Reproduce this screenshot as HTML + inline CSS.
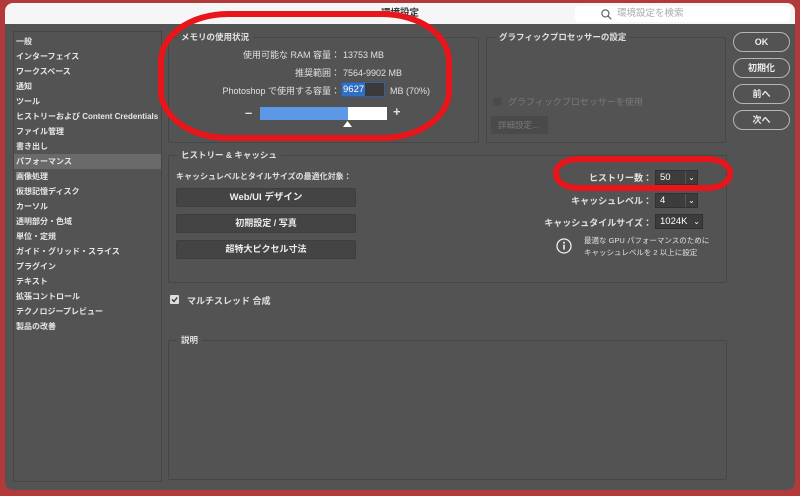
<!DOCTYPE html>
<html><head><meta charset="utf-8"><style>
*{margin:0;padding:0;box-sizing:border-box}
body{width:800px;height:496px;background:#b23a3a;position:relative;overflow:hidden;font-family:"Liberation Sans","Noto Sans CJK JP",sans-serif;font-size:9px;color:#e0e0e0}
.win{position:absolute;left:5px;top:3px;width:790px;height:487px;background:#535353;border-radius:8px;overflow:hidden}
.title{position:absolute;left:0;top:0;width:790px;height:21px;background:#f6f6f6;color:#333;text-align:center;font-size:9.5px;line-height:21px;font-weight:bold}
.search{position:absolute;left:570px;top:3px;width:215px;height:16px;background:#fff;border-radius:4px;color:#aaa;font-weight:normal;font-size:9.5px;line-height:16px;text-align:left;padding-left:42px}
.side{position:absolute;left:13px;top:31px;width:149px;height:451px;border:1px solid #454545;background:#535353}
.side div{height:15px;line-height:15px;padding-left:2px;white-space:nowrap;overflow:hidden;font-weight:bold;font-size:8px;color:#e6e6e6}
.side .sel{background:#6a6a6a}
.box{position:absolute;border:1px solid #464646;border-radius:2px}
.lbl{position:absolute;top:-7px;left:8px;background:#535353;padding:0 4px;font-weight:bold;font-size:8.5px}
.t,.r{position:absolute;white-space:nowrap;line-height:12px}
.r{text-align:right}
.btn{position:absolute;background:#444;border:1px solid #3e3e3e;border-radius:2px;text-align:center;font-weight:bold;color:#eee}
.rb{position:absolute;left:733px;width:57px;height:20px;border:1px solid #b5b5b5;border-radius:10px;text-align:center;line-height:18px;font-weight:bold;color:#eee;font-size:9px}
.sel2{position:absolute;background:#3c3c3c;border:1px solid #303030;height:15px;line-height:13px;padding-left:4px;color:#fff;font-size:9.5px}
.ell{position:absolute;border:6px solid #e8151a}
</style></head><body>
<div class="win">
<div class="title">環境設定<div class="search"><svg style="position:absolute;left:26px;top:3px" width="11" height="11" viewBox="0 0 10 10"><circle cx="4" cy="4" r="3.2" fill="none" stroke="#666" stroke-width="1.1"/><path d="M6.4 6.4L9.3 9.3" stroke="#666" stroke-width="1.2"/></svg>環境設定を検索</div></div>
</div>
<div class="side">
<div style="margin-top:2px">一般</div><div>インターフェイス</div><div>ワークスペース</div><div>通知</div><div>ツール</div><div>ヒストリーおよび Content Credentials</div><div>ファイル管理</div><div>書き出し</div><div class="sel">パフォーマンス</div><div>画像処理</div><div>仮想記憶ディスク</div><div>カーソル</div><div>透明部分・色域</div><div>単位・定規</div><div>ガイド・グリッド・スライス</div><div>プラグイン</div><div>テキスト</div><div>拡張コントロール</div><div>テクノロジープレビュー</div><div>製品の改善</div>
</div>
<div class="box" style="left:168px;top:37px;width:311px;height:106px"><div class="lbl">メモリの使用状況</div></div>
<div class="r" style="right:460px;top:49px">使用可能な RAM 容量：</div>
<div class="t" style="left:343px;top:49px">13753 MB</div>
<div class="r" style="right:460px;top:67px">推奨範囲：</div>
<div class="t" style="left:343px;top:67px">7564-9902 MB</div>
<div class="r" style="right:460px;top:85px">Photoshop で使用する容量：</div>
<div style="position:absolute;left:341px;top:82px;width:44px;height:15px;background:#3a3a3a;border:1px solid #2f5f9f"><span style="background:#2f6fc4;color:#fff;font-size:9.5px;padding:0 1px;line-height:13px;display:inline-block">9627</span></div>
<div class="t" style="left:390px;top:85px">MB (70%)</div>
<div class="t" style="left:245px;top:107px;font-size:13px;font-weight:bold">–</div>
<div style="position:absolute;left:260px;top:107px;width:127px;height:13px;background:#fff"><div style="width:88px;height:13px;background:#5b98e6"></div></div>
<div class="t" style="left:393px;top:106px;font-size:13px;font-weight:bold">+</div>
<svg style="position:absolute;left:343px;top:121px" width="9" height="7"><path d="M4.5 0L9 6H0Z" fill="#fff"/></svg>
<div class="box" style="left:486px;top:37px;width:240px;height:106px"><div class="lbl">グラフィックプロセッサーの設定</div></div>
<div style="position:absolute;left:493px;top:97px;width:9px;height:9px;background:#4a4a4a;border:1px solid #4f4f4f"></div>
<div class="t" style="left:508px;top:96px;color:#7a7a7a">グラフィックプロセッサーを使用</div>
<div style="position:absolute;left:491px;top:116px;width:57px;height:18px;background:#4a4a4a;color:#7a7a7a;line-height:18px;padding-left:7px;font-size:8.5px">詳細設定...</div>
<div class="rb" style="top:32px">OK</div><div class="rb" style="top:58px">初期化</div><div class="rb" style="top:84px">前へ</div><div class="rb" style="top:110px">次へ</div>
<div class="box" style="left:168px;top:155px;width:559px;height:128px"><div class="lbl">ヒストリー &amp; キャッシュ</div></div>
<div class="t" style="left:176px;top:171px;font-size:8px;font-weight:bold">キャッシュレベルとタイルサイズの最適化対象：</div>
<div class="btn" style="left:176px;top:188px;width:180px;height:19px;line-height:17px;font-size:9.5px">Web/UI デザイン</div>
<div class="btn" style="left:176px;top:214px;width:180px;height:19px;line-height:17px;font-size:9px">初期設定 / 写真</div>
<div class="btn" style="left:176px;top:240px;width:180px;height:19px;line-height:17px;font-size:9px">超特大ピクセル寸法</div>
<div class="r" style="right:148px;top:172px;font-weight:bold">ヒストリー数：</div>
<div class="sel2" style="left:655px;top:170px;width:43px">50<span style="position:absolute;right:0;top:0;width:12px;border-left:1px solid #555;text-align:center;font-size:8px">⌄</span></div>
<div class="r" style="right:148px;top:195px;font-weight:bold">キャッシュレベル：</div>
<div class="sel2" style="left:655px;top:193px;width:43px">4<span style="position:absolute;right:0;top:0;width:12px;border-left:1px solid #555;text-align:center;font-size:8px">⌄</span></div>
<div class="r" style="right:148px;top:217px;font-weight:bold">キャッシュタイルサイズ：</div>
<div class="sel2" style="left:655px;top:214px;width:48px">1024K<span style="position:absolute;right:2px;top:0;font-size:8px">⌄</span></div>
<svg style="position:absolute;left:556px;top:238px" width="16" height="16"><circle cx="8" cy="8" r="7" fill="none" stroke="#eee" stroke-width="1.3"/><circle cx="8" cy="4.6" r="1" fill="#eee"/><rect x="7.2" y="6.6" width="1.6" height="5" fill="#eee"/></svg>
<div class="t" style="left:584px;top:235px;font-size:7.5px;line-height:12px">最適な GPU パフォーマンスのために<br>キャッシュレベルを 2 以上に設定</div>
<div style="position:absolute;left:170px;top:295px;width:9px;height:9px;background:#ddd;border-radius:1px"><svg width="9" height="9" style="display:block"><path d="M2 4.5L4 6.5L7.2 2.5" fill="none" stroke="#333" stroke-width="1.4"/></svg></div>
<div class="t" style="left:187px;top:295px;font-weight:bold">マルチスレッド 合成</div>
<div class="box" style="left:168px;top:340px;width:559px;height:140px"><div class="lbl">説明</div></div>
<div class="ell" style="left:158px;top:11px;width:294px;height:130px;border-radius:70px/50px"></div>
<div class="ell" style="left:553px;top:156px;width:180px;height:35px;border-radius:25px/17px"></div>
</body></html>
